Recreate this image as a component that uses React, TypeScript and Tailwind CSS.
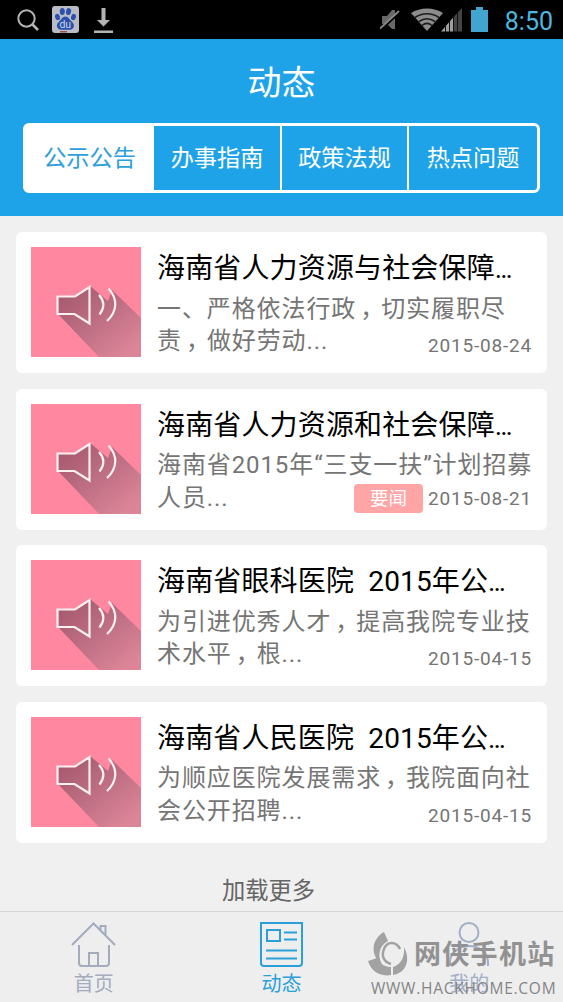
import type { ReactNode } from "react";

const tabs = ["公示公告", "办事指南", "政策法规", "热点问题"];

const news = [
  {
    title: "海南省人力资源与社会保障",
    lines: ["一、严格依法行政，切实履职尽", "责，做好劳动..."],
    date: "2015-08-24",
  },
  {
    title: "海南省人力资源和社会保障",
    lines: ["海南省2015年“三支一扶”计划招募", "人员..."],
    date: "2015-08-21",
    tag: "要闻",
  },
  {
    title: "海南省眼科医院  2015年公",
    lines: ["为引进优秀人才，提高我院专业技", "术水平，根..."],
    date: "2015-04-15",
  },
  {
    title: "海南省人民医院  2015年公",
    lines: ["为顺应医院发展需求，我院面向社", "会公开招聘..."],
    date: "2015-04-15",
  },
];

function StatusBar() {
  return (
    <div className="h-[39px] bg-black flex items-center justify-between pl-[17px] pr-[10px]">
      <div className="flex items-center">
        <svg width="22" height="24" viewBox="0 0 22 24" fill="none" stroke="#b4b4b4" strokeWidth="2">
          <circle cx="9.5" cy="10.5" r="8.2" />
          <path d="M15.5 16.5L21 22" strokeWidth="2.6" />
        </svg>
        <svg className="ml-[13px]" width="27" height="27" viewBox="0 0 27 27">
          <rect width="27" height="27" rx="3" fill="#b9bcc4" />
          <g fill="#2c50b0">
            <ellipse cx="5.5" cy="11" rx="2.4" ry="3.2" transform="rotate(-15 5.5 11)" />
            <ellipse cx="10.3" cy="5.6" rx="2.5" ry="3.5" />
            <ellipse cx="16.6" cy="5.6" rx="2.5" ry="3.5" transform="rotate(10 16.6 5.6)" />
            <ellipse cx="21.5" cy="11" rx="2.4" ry="3.2" transform="rotate(15 21.5 11)" />
            <path d="M13.4 10.5c3 0 4 3 6 4.8 2.2 1.9 3 3.5 2.3 5.7-.8 2.6-3.2 2.9-8.3 2.7-5 .3-7.5-.1-8.3-2.7-.7-2.2.1-3.8 2.3-5.7 2-1.8 3-4.8 6-4.8z" />
          </g>
          <text x="13.3" y="21.8" textAnchor="middle" fontFamily="Roboto, sans-serif" fontSize="10.5" fill="#d0d4de">du</text>
          <path d="M8 25.8h7" stroke="#a04048" strokeWidth="1.4" />
        </svg>
        <svg className="ml-[15px]" width="19" height="26" viewBox="0 0 19 26" fill="#b4b4b4">
          <path d="M7.5 1h4v12H16l-6.500 6.500L3 13h4.500zM0 23.400h19V26H0z" />
        </svg>
      </div>
      <div className="flex items-center">
        <svg width="20" height="24" viewBox="0 0 20 24">
          <path d="M2 8h5l5-6h3v19h-3l-5-5H2z" fill="#686868" />
          <path d="M2 21L20 4" stroke="#000" strokeWidth="2" />
          <path d="M0 20.5L19 3" stroke="#888" strokeWidth="1.8" />
        </svg>
        <svg className="ml-[11px]" width="32" height="24" viewBox="0 0 32 24">
          <path d="M16 23L0 5C9-1 23-1 32 5z" fill="#8c8c8c" />
          <path d="M4 9.5C11 4.5 21 4.5 28 9.5M8 13.5c5-3.500 11-3.500 16 0M11 17.500c3-2.500 7-2.500 10 0" fill="none" stroke="#1c1c1c" strokeWidth="1.6" />
        </svg>
        <svg className="-ml-[2px]" width="21" height="24" viewBox="0 0 21 24">
          <path d="M0 23.5L13 8.5v15z" fill="#a0a0a0" />
          <path d="M13 8.5L21 0v23.5h-8z" fill="#444" />
          <path d="M4.5 17v7M8.5 13v11M12.5 8v16M16.5 4v20" stroke="#111" />
        </svg>
        <svg className="ml-[9px]" width="17" height="25" viewBox="0 0 17 25" fill="#42a5cf">
          <path d="M5 0h7v3h5v22H0V3h5z" />
        </svg>
        <span className="ml-[17px] pt-[3px] text-[25px] leading-none text-[#4cb8e0]">8:50</span>
      </div>
    </div>
  );
}

// long-shadow loudspeaker thumbnail
function Speaker() {
  return (
    <svg className="shrink-0" width="110" height="110" viewBox="0 0 110 110" fill="none">
      <defs>
        <linearGradient id="shade" gradientUnits="userSpaceOnUse" x1="40" y1="45" x2="92" y2="110">
          <stop offset="0" stopColor="#a85c70" />
          <stop offset="0.45" stopColor="#bd6e83" />
          <stop offset="1" stopColor="#dc8598" />
        </linearGradient>
      </defs>
      <rect width="110" height="110" fill="#ff87a0" />
      <path d="M27 49h17l15-10 18 15 4-11L110 71v39H68L27 67z" fill="url(#shade)" />
      <path d="M26.5 49.5H44L58.5 40v36.5L43.5 67h-17z" stroke="#fff0f2" strokeWidth="2.2" />
      <path d="M68 48c5.5 6 5.5 13 .5 19.5M77.5 41.5C87 52 86.5 64 76 74" stroke="#fff0f2" strokeWidth="2.2" />
    </svg>
  );
}

// full-width commas sit in the middle of their cell
function Line({ text }: { text: string }) {
  return (
    <div className="whitespace-nowrap">
      {text.split("，").map((part, i) => (
        <span key={i}>
          {i > 0 && <span className="inline-block w-[25px] pl-[4px] tracking-[-3px]">，</span>}
          {part}
        </span>
      ))}
    </div>
  );
}

function NavItem({ label, className, children }: { label: string; className: string; children: ReactNode }) {
  return (
    <div className={`flex-1 flex flex-col items-center pt-[9px] ${className}`}>
      <svg width="46" height="48" viewBox="0 0 46 48" fill="none" stroke="currentColor" strokeWidth="2">
        {children}
      </svg>
      <span className="text-[20px] leading-[30px]">{label}</span>
    </div>
  );
}

export default function App() {
  return (
    <div className="relative w-[563px] h-[1002px] overflow-hidden bg-[#f0f0f0] flex flex-col font-[Roboto,'Noto_Sans_CJK_SC',sans-serif]">
      <StatusBar />

      <header className="h-[177px] bg-[#1fa3e8] px-[23px] text-white">
        <h1 className="h-[84px] pt-[4px] flex items-center justify-center text-[34px]">动态</h1>
        <div className="h-[70px] w-[517px] grid grid-cols-[128px_128px_127px_128px] border-[3px] border-white rounded-md">
          {tabs.map((tab, i) => (
            <div
              key={tab}
              className={`flex items-center justify-center text-[23.2px] ${
                i === 0 ? "bg-white pr-px text-[#2d9fda]" : ""
              } ${i === 1 || i === 2 ? "border-r-2 border-white" : ""}`}
            >
              {tab}
            </div>
          ))}
        </div>
      </header>

      {/* News list */}
      <main className="flex-1 px-4 pt-4 flex flex-col gap-[15.5px]">
        {news.map((item) => (
          <article key={item.title} className="h-[141px] shrink-0 bg-white rounded-md flex p-[15px] gap-4">
            <Speaker />
            <div className="relative flex-1 min-w-0">
              <h2 className="pt-px whitespace-pre text-[28px] leading-[42px] tracking-[0.15px] text-black">
                {item.title}
                <span className="tracking-[-2px]">...</span>
              </h2>
              <div className="pt-[2.5px] text-[24px] leading-[32.5px] tracking-[0.9px] text-[#757575]">
                {item.lines.map((line) => (
                  <Line key={line} text={line} />
                ))}
              </div>
              <div
                className={`absolute right-0 h-[29px] flex items-center gap-[5px] ${
                  item.tag ? "bottom-[1.5px]" : "bottom-[-2px]"
                }`}
              >
                {item.tag && (
                  <span className="w-[69px] h-[29px] rounded bg-[#ffa5a5] text-white text-[18.5px] leading-[31px] text-center">
                    {item.tag}
                  </span>
                )}
                <span className="pt-[2px] text-[19px] tracking-[0.8px] text-[#757575]">{item.date}</span>
              </div>
            </div>
          </article>
        ))}
        <div className="pt-[13px] pr-[26px] text-center text-[23.3px] leading-[40px] text-[#666]">加载更多</div>
      </main>

      <nav className="h-[91px] shrink-0 border-t border-[#d4d4d4] bg-[#eee] flex">
        <NavItem label="首页" className="text-[#a3abbd]">
          <path d="M1 24L22.5 2.5 44 24M29.5 9V5h5v10M8 24v18q0 3 3 3h24q3 0 3-3V24M18 45V32h9v13" />
        </NavItem>
        <NavItem label="动态" className="text-[#2b9fd9]">
          <path d="M2 2h41v40q0 3-3 3H5q-3 0-3-3zM8 9h13v11H8zM25 11.5h13M25 18.5h13M7 29.5h31M7 37.5h31" />
        </NavItem>
        <NavItem label="我的" className="text-[#a3afc6]">
          <circle cx="23" cy="11.5" r="9.5" />
          <path d="M4 45V40C5 31 13 25 23 25s18 6 19 15v5" />
        </NavItem>
      </nav>

      {/* Site watermark */}
      <div className="absolute left-[368px] bottom-px w-[192px] text-[#858585]">
        <div className="flex items-center">
          <svg width="41" height="44" viewBox="0 0 41 44" fill="#a2a2a2">
            <path d="M16 0L20 9C11 14 9 24 14 32C3 25 2 8 16 0z" />
            <path d="M0 29l9-3c4 7 9 9 14 9v8C12 45 3 39 0 29zM25 35c8-3 12-10 11-20 7 13 2 26-11 28z" />
            <path d="M32 17C28 9 19 9 16 17c-3 7 0 13 7 15" fill="none" stroke="#a2a2a2" strokeWidth="2.5" />
          </svg>
          <span className="ml-[5px] pt-px text-[27px] leading-[40px] tracking-[1.3px] font-bold text-[#929292] whitespace-nowrap">网侠手机站</span>
        </div>
        <div className="pl-[3px] text-[15.5px] leading-[25px] tracking-[0.75px] whitespace-nowrap font-['Open_Sans',sans-serif]">
          WWW.HACKHOME.COM
        </div>
      </div>
    </div>
  );
}
